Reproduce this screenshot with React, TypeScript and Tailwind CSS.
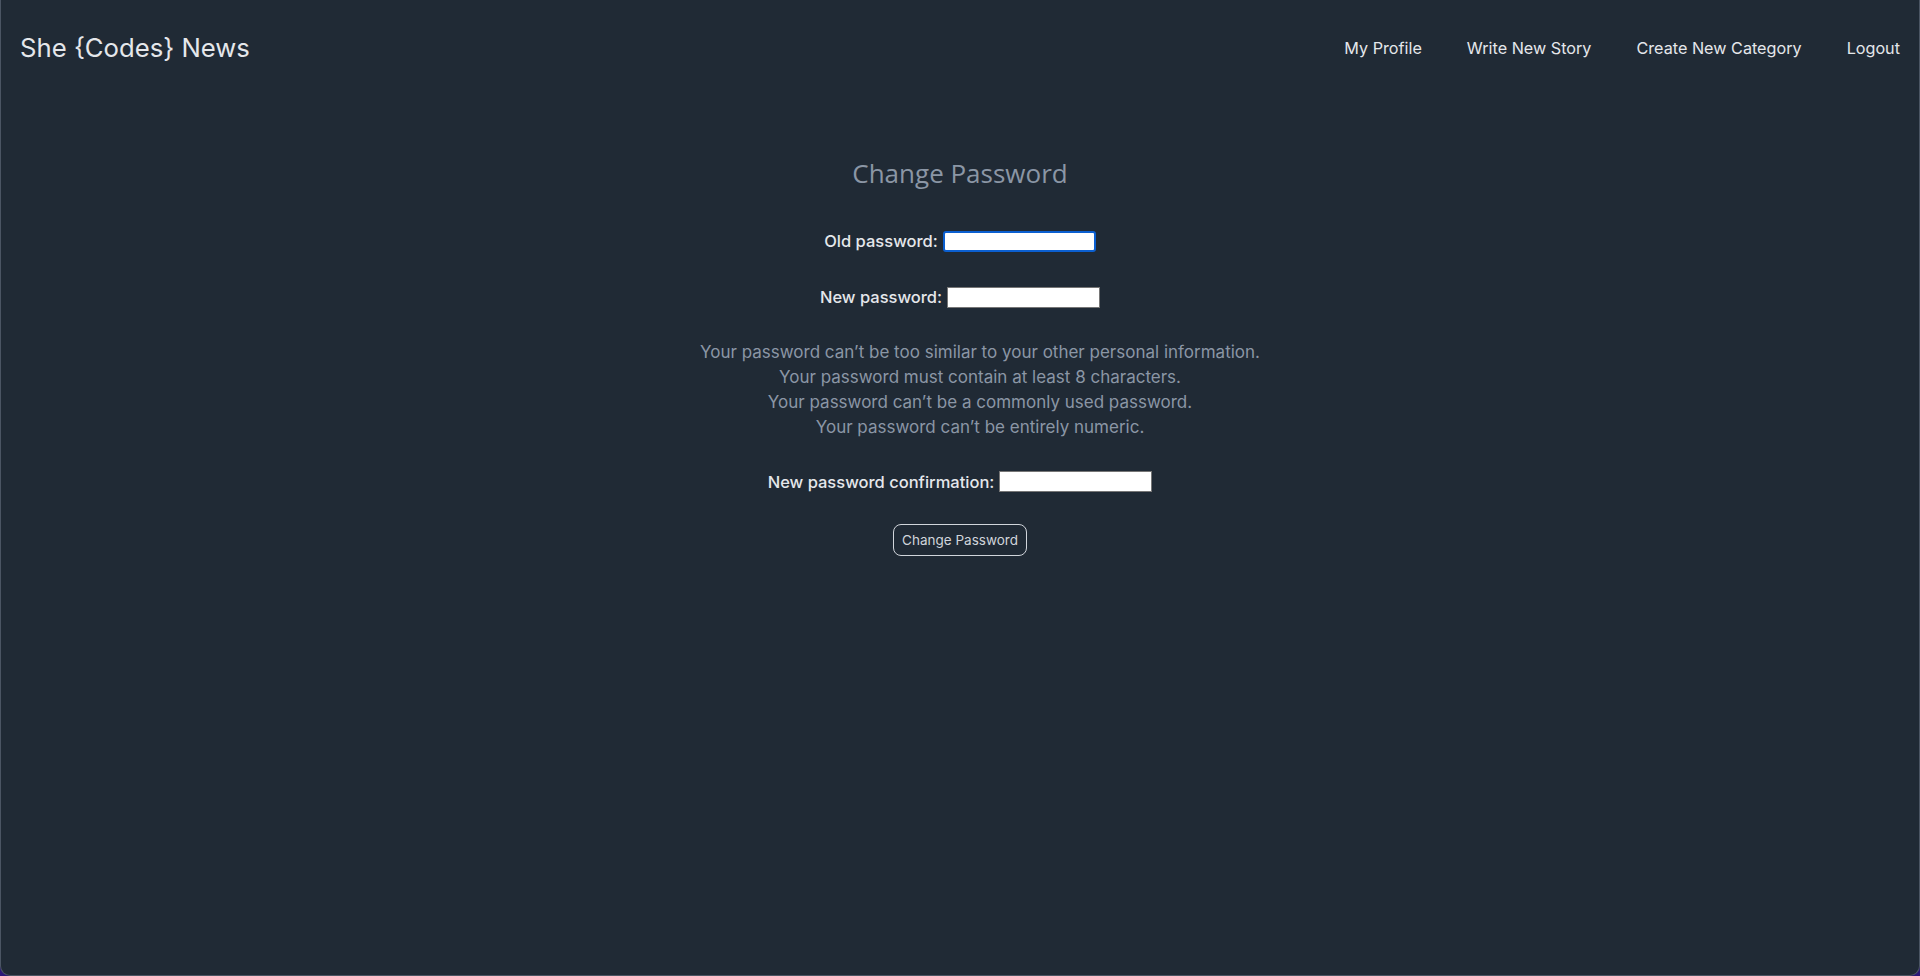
import { useState } from "react";

const navLinks = ["My Profile", "Write New Story", "Create New Category", "Logout"];

const hints = [
  "Your password can’t be too similar to your other personal information.",
  "Your password must contain at least 8 characters.",
  "Your password can’t be a commonly used password.",
  "Your password can’t be entirely numeric.",
];

function Field({ label, autoFocus }: { label: string; autoFocus?: boolean }) {
  const [value, setValue] = useState("");
  return (
    <label className="flex items-center gap-[5px] text-[16.5px] font-medium text-[#e5e7eb]">
      <span>{label}</span>
      <input
        type="password"
        autoFocus={autoFocus}
        value={value}
        onChange={(e) => setValue(e.target.value)}
        className={
          autoFocus
            ? "h-[21px] w-[153px] rounded-[3px] border-2 border-[#0b5fd0] bg-white px-[2px] text-[13px] text-black outline-none"
            : "h-[21px] w-[153px] border border-[#767676] bg-white px-[2px] text-[13px] text-black outline-none"
        }
      />
    </label>
  );
}

export default function App() {
  return (
    <div className="h-screen w-full bg-[#2c1877]">
      <div className="flex h-full w-full flex-col rounded-b-[10px] border-x border-b border-[#4b5563] bg-[#202a35] font-['Inter',sans-serif]">
        <header className="flex h-[96px] items-center justify-between px-[19px]">
          <a className="text-[25.7px] text-[#e5e7eb]">She {"{Codes}"} News</a>
          <nav className="flex items-center gap-[45px] text-[16.2px] text-[#e5e7eb]">
            {navLinks.map((l) => (
              <a key={l}>{l}</a>
            ))}
          </nav>
        </header>

        <main className="flex flex-col items-center">
          <h1 className="mt-[61px] font-['Open_Sans',sans-serif] text-[26px] leading-[32px] text-[#8b96a5]">
            Change Password
          </h1>
          <form className="flex flex-col items-center" onSubmit={(e) => e.preventDefault()}>
            <div className="mt-[40px]">
              <Field label="Old password:" autoFocus />
            </div>
            <div className="mt-[31px]">
              <Field label="New password:" />
            </div>
            <ul className="mt-[30px] flex flex-col items-center pl-[40px] text-[17px] leading-[25px] text-[#8b96a5]">
              {hints.map((h) => (
                <li key={h}>{h}</li>
              ))}
            </ul>
            <div className="mt-[30px]">
              <Field label="New password confirmation:" />
            </div>
            <button
              type="submit"
              className="mt-[30px] h-[32px] rounded-[8px] border border-[#d1d5db] px-[8px] text-[13.5px] text-[#d1d5db]"
            >
              Change Password
            </button>
          </form>
        </main>
      </div>
    </div>
  );
}
